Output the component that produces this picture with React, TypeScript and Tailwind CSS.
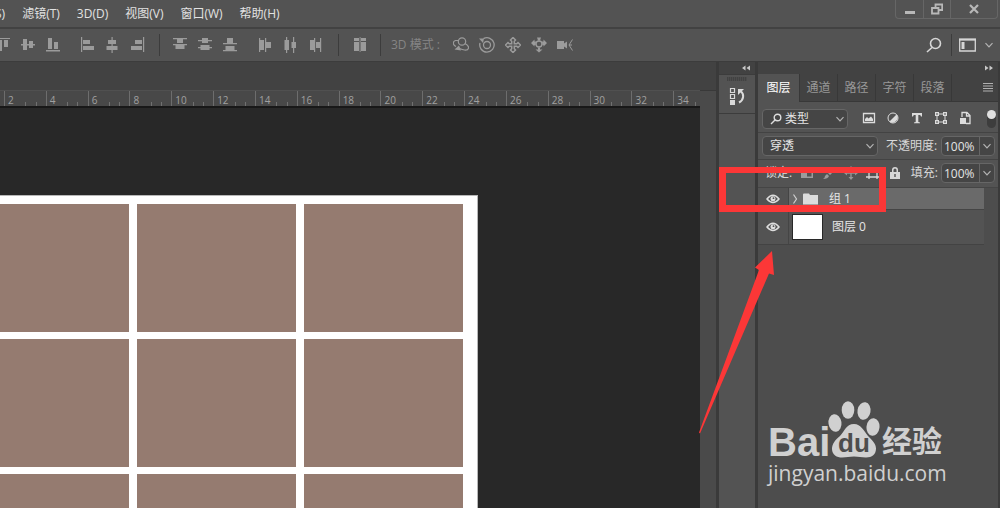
import React from "react";

const menus = ["滤镜(T)", "3D(D)", "视图(V)", "窗口(W)", "帮助(H)"];
const rulerMarks = [2, 4, 6, 8, 10, 12, 14, 16, 18, 20, 22, 24, 26, 28, 30, 32, 34];
const tabs = ["图层", "通道", "路径", "字符", "段落"];

function Icon({ children, label }: { children: React.ReactNode; label: string }) {
  return (
    <button type="button" aria-label={label} className="block h-4 w-4 shrink-0">
      <svg viewBox="0 0 16 16" className="block h-4 w-4 fill-current">
        {children}
      </svg>
    </button>
  );
}

function Chevron() {
  return (
    <svg viewBox="0 0 10 10" className="block h-[10px] w-[10px]" fill="none" stroke="#b4b4b4" strokeWidth="1.2">
      <path d="M1.5 3.2 5 6.8 8.500 3.2" />
    </svg>
  );
}

function Separator() {
  return <div className="h-[22px] w-px shrink-0 bg-[#3c3c3c]" />;
}

function MenuBar() {
  return (
    <header className="flex h-[27px] shrink-0 items-start justify-between overflow-hidden">
      <nav className="-ml-[5px] flex gap-[17px] pt-[5px] text-xs leading-[18px] whitespace-nowrap text-[#e2e2e2]">
        <button type="button">S)</button>
        {menus.map((m) => (
          <button type="button" key={m}>{m}</button>
        ))}
      </nav>
      <div className="mr-[2px] flex h-[19px] rounded-b border border-t-0 border-[#666] text-[#b8b8b8]">
        <button type="button" aria-label="最小化" className="flex w-7 items-center justify-center border-r border-[#666]">
          <svg viewBox="0 0 12 12" className="h-3 w-3"><path d="M1 8h10v3H1z" fill="currentColor" /></svg>
        </button>
        <button type="button" aria-label="还原" className="flex w-[27px] items-center justify-center border-r border-[#666]">
          <svg viewBox="0 0 12 12" className="h-3 w-3" fill="none" stroke="currentColor" strokeWidth="1.800">
            <path d="M4.500 4V1.500h6.700v5.500H8M1 5h6.500v5.500H1z" />
          </svg>
        </button>
        <button type="button" aria-label="关闭" className="flex w-[46px] items-center justify-center">
          <svg viewBox="0 0 12 12" className="h-3 w-3" fill="none" stroke="currentColor" strokeWidth="2.200">
            <path d="M2 2l8 8M10 2l-8 8" />
          </svg>
        </button>
      </div>
    </header>
  );
}

function OptionsBar() {
  return (
    <div className="flex h-[35px] shrink-0 items-center justify-between overflow-hidden border-t-2 border-b border-t-[#424242] border-b-[#3c3c3c]">
      <div className="-ml-[5px] flex items-center text-[#9b9b9b]">
        <div className="flex gap-[9px]">
          <Icon label="顶对齐"><path d="M1 1h14v1H1zM3 3h4v11H3zM9 3h4v7H9z" /></Icon>
          <Icon label="垂直居中对齐"><path d="M1 7h14v1.500H1zM3 2h4v11H3zM9 4h4v7H9z" /></Icon>
          <Icon label="底对齐"><path d="M1 13h14v1.500H1zM3 1h4v11H3zM9 5h4v7H9z" /></Icon>
        </div>
        <div className="ml-[18px] flex gap-[9px]">
          <Icon label="左对齐"><path d="M2 0h1.200v15H2zM4 3h7v4H4zM4 9h11v4H4z" /></Icon>
          <Icon label="水平居中对齐"><path d="M7.500 0h1.200v16H7.500zM4 3h8v4H4zM2.500 9h11v4h-11z" /></Icon>
          <Icon label="右对齐"><path d="M14 0h1.200v15H14zM6 3h7v4H6zM2 9h11v4H2z" /></Icon>
        </div>
        <div className="ml-[14px]"><Separator /></div>
        <div className="ml-3 flex gap-[9px]">
          <Icon label="按顶分布"><path d="M1 1h14v1.200H1zM5 2h6v4H5zM1 7h14v1.200H1zM3.500 8h9v4h-9z" /></Icon>
          <Icon label="垂直居中分布"><path d="M1 3h14v1.200H1zM5 1h6v5H5zM1 10h14v1.200H1zM3.500 8h9v5h-9z" /></Icon>
          <Icon label="按底分布"><path d="M1 6h14v1.200H1zM5 1h6v5H5zM1 13h14v1.200H1zM3.500 9h9v4h-9z" /></Icon>
        </div>
        <div className="ml-[19px] flex gap-[9px]">
          <Icon label="按左分布"><path d="M2 1h1.200v14H2zM3 3h4v10H3zM8 1h1.200v14H8zM9 5h5v6H9z" /></Icon>
          <Icon label="水平居中分布"><path d="M4 0h1.200v16H4zM2.500 3h4.500v10H2.500zM11 0h1.200v16H11zM9.500 5h4.500v6H9.500z" /></Icon>
          <Icon label="按右分布"><path d="M7 1h1.200v14H7zM3 3h4v10H3zM13 1h1.200v14H13zM9 5h4v6H9z" /></Icon>
        </div>
        <div className="ml-[15px]"><Separator /></div>
        <div className="ml-[13px]">
          <Icon label="自动对齐图层"><path d="M2 1h5v3H2zM2 5h5v9H2zM7.700 0h.8v15h-.8zM9 1h5v3H9zM9 5h5v9H9z" /></Icon>
        </div>
        <div className="ml-3"><Separator /></div>
        <span className="ml-[10px] w-[62px] text-xs whitespace-nowrap text-[#858585]">3D 模式 :</span>
        <div className="flex gap-[10px]">
          <Icon label="旋转">
            <g fill="none" stroke="currentColor" strokeWidth="1.200">
              <circle cx="9" cy="4.500" r="3.700" />
              <path d="M5.500 3.500H2.500C-.5 4.500-.5 8 3 9.500M12 6.500q4 2 3.500 4.500-.5 2.500-4 2-2-.3-5-1.500" />
            </g>
            <path d="M1.500 12.500 6 8.500l2 5z" />
          </Icon>
          <Icon label="滚动">
            <g fill="none" stroke="currentColor" strokeWidth="1.300">
              <circle cx="8" cy="8" r="3.500" />
              <path d="M4.500 1.600A7.200 7.200 0 1 1 1 6" />
            </g>
            <path d="M0 1.500h5l-1 4.500z" />
          </Icon>
          <Icon label="拖动">
            <path d="M8 .5l2.500 2.500L9.300 4.200v2.500h2.500L13 5.500 15.500 8 13 10.500l-1.200-1.200H9.300v2.500l1.200 1.200L8 15.500 5.500 13l1.200-1.200V9.300H4.200L3 10.500.5 8 3 5.500l1.200 1.200h2.500V4.200L5.500 3z" fill="none" stroke="currentColor" strokeWidth="1.500" />
          </Icon>
          <Icon label="滑动">
            <circle cx="8" cy="7" r="3" fill="none" stroke="currentColor" strokeWidth="1.400" />
            <path d="M0 6l3.500-3.500v2H5L4.500 8H3.500v1.500zM16 6l-3.500-3.500v2H11l.5 3.500h1v1.500zM8 15.500l-3.500-3H7V10.500h2v2h2.500zM6 .5h4L9 3.500H7z" />
          </Icon>
          <Icon label="缩放">
            <path d="M0 4h7v2.500l3-2v7l-3-2V12H0z" />
            <path d="M15.500 2.500 12 8l3.500 5.500M12 8h3" fill="none" stroke="currentColor" />
          </Icon>
        </div>
      </div>
      <div className="flex items-center pr-[6px] text-[#d6d6d6]">
        <button type="button" aria-label="搜索">
          <svg viewBox="0 0 16 16" className="block h-4 w-4" fill="none" stroke="currentColor" strokeWidth="1.600">
            <circle cx="9.500" cy="6.500" r="5" /><path d="M6 10.500 1 15" />
          </svg>
        </button>
        <div className="mr-[7px] ml-[9px]"><Separator /></div>
        <button type="button" aria-label="工作区" className="flex items-center gap-2">
          <svg viewBox="0 0 17 14" className="block h-[14px] w-[17px]">
            <path d="M.7 1.500h15.600v11.500H.7z" fill="none" stroke="currentColor" strokeWidth="1.300" />
            <path d="M0 .5h17v2H0zM2.500 4h3v7h-3z" fill="currentColor" />
          </svg>
          <Chevron />
        </button>
      </div>
    </div>
  );
}

function Ruler() {
  return (
    <div className="h-4 shrink-0 overflow-hidden border-t border-[#505050] bg-[#484848]">
      <div className="ml-1 flex h-full w-[711px] text-[10px] leading-4 text-[#a0a0a0]">
        {rulerMarks.map((n) => (
          <div key={n} className="relative flex-1 border-l border-[#6d6d6d] pt-px pl-[3px]">
            {n}
            <i className="absolute bottom-0 left-1/2 h-1 w-px bg-[#707070]" />
            <i className="absolute bottom-0 left-3/4 h-1 w-px bg-[#707070]" />
          </div>
        ))}
      </div>
    </div>
  );
}

function DocumentArea() {
  return (
    <main className="flex min-w-0 flex-1 flex-col">
      <div className="h-7 shrink-0 bg-[#424242]" />
      <div className="flex min-h-0 flex-1">
        <div className="flex min-w-0 flex-1 flex-col">
          <Ruler />
          <div className="min-h-0 flex-1 overflow-hidden border-t-2 border-[#181818] bg-[#282828] pt-[87px]">
            <div className="grid w-[478px] grid-cols-[129px_159px_159px] gap-x-2 gap-y-[7px] border-t border-r border-[#b8b8b8] bg-white pt-2">
              {Array.from({ length: 9 }, (_, i) => (
                <div key={i} className="h-32 bg-[#957b70]" />
              ))}
            </div>
          </div>
        </div>
        <div className="w-4 shrink-0 border-t border-[#393939] bg-[#4a4a4a]" />
      </div>
    </main>
  );
}

function Combo({ label, value, children }: { label: string; value: string; children?: React.ReactNode }) {
  return (
    <label className="flex h-5 w-full items-center rounded-sm border border-[#666] bg-[#454545] pr-[2px] pl-[7px]">
      {children}
      <select aria-label={label} defaultValue={value} className="min-w-0 flex-1 appearance-none bg-transparent leading-[18px] text-[#e4e4e4] outline-none">
        <option>{value}</option>
      </select>
      <Chevron />
    </label>
  );
}

function Percent({ id }: { id: string }) {
  return (
    <div className="ml-auto flex h-5 w-[54px] shrink-0 items-center rounded-sm border border-[#666] bg-[#454545]">
      <input id={id} defaultValue="100%" className="h-full w-[38px] border-r border-[#666] bg-transparent pl-[2px] text-xs text-[#e4e4e4] outline-none" />
      <button type="button" aria-label="调整" className="flex flex-1 justify-center"><Chevron /></button>
    </div>
  );
}

function Eye() {
  return (
    <button type="button" aria-label="可见性" className="flex w-[31px] shrink-0 items-center justify-center self-stretch border-r border-[#454545]">
      <svg viewBox="0 0 14 10" className="h-[10px] w-[14px]">
        <path d="M1 5Q7-2.500 13 5 7 12 1 5Z" fill="none" stroke="#dedede" strokeWidth="1.500" />
        <circle cx="7" cy="4.800" r="2.500" fill="#dedede" />
        <circle cx="7.500" cy="4.200" r=".9" fill="#535353" />
      </svg>
    </button>
  );
}

function Watermark() {
  return (
    <div className="absolute right-[53px] bottom-5 w-[179px] text-[#d0d0d0]">
      <div className="flex items-end">
        <span className="w-[58px] font-['Liberation_Sans',sans-serif] text-[40px] leading-[32px] font-bold">Bai</span>
        <svg viewBox="0 0 54 58" className="h-[58px] w-[54px] shrink-0">
          <g fill="#d0d0d0">
            <ellipse cx="9" cy="23" rx="6.500" ry="8.800" transform="rotate(-8 9 23)" />
            <ellipse cx="22" cy="10" rx="6.300" ry="8.800" />
            <ellipse cx="38" cy="11" rx="6.500" ry="8.800" transform="rotate(10 38 11)" />
            <ellipse cx="47" cy="27" rx="6.500" ry="8.800" transform="rotate(6 47 27)" />
            <path d="M28 24c-8 0-10 8-14 12-5 4-8 8-8 13 0 6 5 8.500 10 8.500 5 0 7-1 12-1s7 1 12 1c6 0 10-3 10-9 0-5-4-8.500-8-12.500-4-5-7-12-14-12z" />
          </g>
          <text x="12" y="52" fill="#4d4d4d" fontFamily="Liberation Sans, sans-serif" fontWeight="700" fontSize="26">du</text>
        </svg>
        <span className="ml-[2px] text-[30px] leading-[34px] font-bold whitespace-nowrap">经验</span>
      </div>
      <div className="text-[21px] leading-[30px] font-medium">jingyan.baidu.com</div>
    </div>
  );
}

function LayersPanel() {
  return (
    <section className="flex min-h-0 flex-1 flex-col bg-[#4d4d4d] text-xs">
      <div className="flex h-7 shrink-0 items-stretch bg-[#424242] text-[#989898]">
        {tabs.map((t, i) => (
          <button
            type="button"
            key={t}
            className={
              i === 0
                ? "w-[42px] border-r border-[#383838] bg-[#535353] text-white"
                : "w-[38px] border-r border-b border-[#383838]"
            }
          >
            {t}
          </button>
        ))}
        <button type="button" aria-label="面板菜单" className="flex flex-1 items-center justify-end border-b border-[#383838] pr-[5px]">
          <svg viewBox="0 0 10 9" className="h-[9px] w-[10px]"><path d="M0 .5h10M0 3h10M0 5.500h10M0 8h10" stroke="#b0b0b0" /></svg>
        </button>
      </div>

      <div className="flex h-[31px] shrink-0 items-center border-b border-[#434343] bg-[#535353] px-1 pt-[3px] text-[#dcdcdc]">
        <div className="w-[86px] shrink-0">
          <Combo label="类型" value="类型">
            <svg viewBox="0 0 12 12" className="mr-[3px] h-3 w-3 shrink-0" fill="none" stroke="currentColor" strokeWidth="1.400">
              <circle cx="7.500" cy="4.500" r="3.300" /><path d="M5 7 1 11" />
            </svg>
          </Combo>
        </div>
        <div className="ml-[13px] flex flex-1 justify-between">
          <Icon label="像素图层">
            <path d="M2.500 3.500h11v9h-11z" fill="none" stroke="currentColor" strokeWidth="1.300" />
            <path d="M4 11V9l2-2 1.500 1.500L10 6.500 12 9v2z" />
          </Icon>
          <Icon label="调整图层">
            <circle cx="8" cy="8" r="5" fill="none" stroke="currentColor" />
            <path d="M11.500 4.500A5 5 0 0 1 4.500 11.500z" />
          </Icon>
          <Icon label="文字图层"><path d="M3 3h10v3.500h-1L11.200 5H9.300v7l1.700.5v.8H5v-.8l1.700-.5V5H4.800L4 6.500H3z" /></Icon>
          <Icon label="形状图层">
            <path d="M4 4h8v8H4z" fill="none" stroke="currentColor" />
            <path d="M2 2h4v4H2zM10 2h4v4h-4zM2 10h4v4H2zM10 10h4v4h-4z" />
            <path d="M3.300 3.300h1.400v1.400H3.300zM11.300 3.300h1.400v1.400h-1.400zM3.300 11.300h1.400v1.400H3.300zM11.300 11.300h1.400v1.400h-1.400z" fill="#535353" />
          </Icon>
          <Icon label="智能对象">
            <path d="M5 7V2.500h5l3 3v8H9M9.500 2.500V6H13" fill="none" stroke="currentColor" strokeWidth="1.300" />
            <path d="M3 8h6v6H3z" />
          </Icon>
          <label className="ml-[6px] -mr-[2px] flex h-[18px] w-[9px] items-start rounded-full bg-[#3d3d3d]">
            <input type="checkbox" defaultChecked aria-label="打开图层过滤" className="h-[9px] w-[9px] appearance-none rounded-full bg-[#e0e0e0]" />
          </label>
        </div>
      </div>

      <div className="flex h-[27px] shrink-0 items-center border-b border-[#434343] bg-[#535353] pr-[3px] pl-1 text-[#d8d8d8]">
        <div className="mr-2 w-[116px] shrink-0"><Combo label="混合模式" value="穿透" /></div>
        <label htmlFor="opacity" className="whitespace-nowrap">不透明度:</label>
        <Percent id="opacity" />
      </div>

      <div className="flex h-[28px] shrink-0 items-center border-b border-[#454545] bg-[#535353] pr-[3px] pb-px pl-[7px] text-[#d8d8d8]">
        <span className="w-[34px] shrink-0 whitespace-nowrap">锁定:</span>
        <div className="flex flex-1 items-center justify-between pr-2">
          <Icon label="锁定透明像素"><path d="M2 3h12v10H2zm1.500 1.500v3.500H8V4.500zM8 8v3.500h4.500V8z" fillRule="evenodd" opacity=".55" /></Icon>
          <Icon label="锁定图像像素"><path d="M13 2 15 4 9 10 7 8zM6 9l2 2q-1 3-6 3 2-1 2-3z" opacity=".55" /></Icon>
          <Icon label="锁定位置"><path d="M8 1l2.500 3H8.700v3.300H12V5.500L15 8l-3 2.500V8.700H8.700V12h1.800L8 15l-2.500-3h1.800V8.700H4v1.800L1 8l3-2.500v1.800h3.300V4H5.500z" opacity=".5" /></Icon>
          <Icon label="防止嵌套"><path d="M4 2v12M12 2v12M1 5h14M1 12h14" fill="none" stroke="currentColor" strokeWidth="1.300" /></Icon>
          <Icon label="锁定全部"><path d="M3 7h10v7H3zM5 7V5q0-3 3-3t3 3v2H9.500V5q0-1.500-1.500-1.500T6.500 5v2z" /><path d="M7.300 9h1.400v3H7.300z" fill="#535353" /></Icon>
        </div>
        <label htmlFor="fill" className="mr-[3px] whitespace-nowrap">填充:</label>
        <Percent id="fill" />
      </div>

      <ul className="mr-[14px] text-[#e6e6e6]">
        <li className="flex h-[22px] items-center border-b border-[#454545] bg-[#535353]">
          <Eye />
          <div className="flex h-full flex-1 items-center bg-[#6a6a6a] pl-[3px]">
            <button type="button" aria-label="展开组">
              <svg viewBox="0 0 7 10" className="block h-[10px] w-[7px]" fill="none" stroke="#d0d0d0" strokeWidth="1.200"><path d="M1.500.5 4.500 5 1.500 9.500" /></svg>
            </button>
            <svg viewBox="0 0 15 12" className="ml-1 h-3 w-[15px]"><path d="M0 1.500Q0 .5 1 .5h5L7 2h8v9.500H0z" fill="#dcdcdc" /></svg>
            <span className="ml-[11px]">组 1</span>
          </div>
        </li>
        <li className="flex h-[35px] items-center border-b border-[#434343] bg-[#535353]">
          <Eye />
          <div className="ml-[3px] h-[26px] w-[31px] border border-[#282828] bg-white" />
          <span className="ml-[9px]">图层 0</span>
        </li>
      </ul>
    </section>
  );
}

function Dock() {
  return (
    <aside className="relative flex w-[284px] shrink-0 bg-[#3a3a3a] pr-[2px] pl-[3px]">
      <div className="flex w-9 shrink-0 flex-col">
        <div className="flex h-3 shrink-0 items-center justify-end bg-[#424242] pr-[5px]">
          <svg viewBox="0 0 8 6" className="h-[6px] w-2"><path d="M3.500 0.500v5L0 3zM8 .5v5L4.500 3z" fill="#c8c8c8" /></svg>
        </div>
        <div className="flex h-10 shrink-0 flex-col items-center border-y border-[#3c3c3c] bg-[#535353] pt-[2px]">
          <div className="h-1 w-5 bg-[repeating-linear-gradient(90deg,#424242_0_1px,#4c4c4c_1px_2px)]" />
          <button type="button" aria-label="历史记录" className="mt-[6px]">
            <svg viewBox="0 0 16 18" className="block h-[18px] w-4" fill="none" stroke="#dadada">
              <path d="M1.500 1.500h4v4h-4zM1.500 7.500h4v4h-4z" strokeWidth="1.200" />
              <path d="M1 13h5v5H1z" fill="#dadada" stroke="none" />
              <path d="M11.500 4c4 3 3.500 9-1.500 11.500" strokeWidth="2" />
              <path d="M9 8V2h6z" fill="#dadada" stroke="none" />
            </svg>
          </button>
        </div>
        <div className="flex-1 bg-[#535353]" />
      </div>
      <div className="ml-[3px] flex min-w-0 flex-1 flex-col">
        <div className="flex h-3 shrink-0 items-center justify-end bg-[#424242] pr-[5px]">
          <svg viewBox="0 0 8 6" className="h-[6px] w-2"><path d="M0 .5v5L3.500 3zM4.500.5v5L8 3z" fill="#c8c8c8" /></svg>
        </div>
        <LayersPanel />
      </div>
      <div className="pointer-events-none absolute top-[105px] left-[3px] h-[45px] w-[167px] border-[7px] border-t-[6px] border-[#fc3737]" />
      <svg viewBox="0 0 76 184" className="pointer-events-none absolute top-[188px] -left-[17px] h-[184px] w-[76px]">
        <path d="M73 1 75 25 70 23.500 1 183.500 0 182.500 60 20 56 17.500z" fill="#fc3737" />
      </svg>
      <Watermark />
    </aside>
  );
}

export default function App() {
  return (
    <div className="flex h-screen flex-col overflow-hidden bg-[#535353] font-['Open_Sans','Noto_Sans_CJK_SC',sans-serif]">
      <MenuBar />
      <OptionsBar />
      <div className="flex min-h-0 flex-1">
        <DocumentArea />
        <Dock />
      </div>
    </div>
  );
}
